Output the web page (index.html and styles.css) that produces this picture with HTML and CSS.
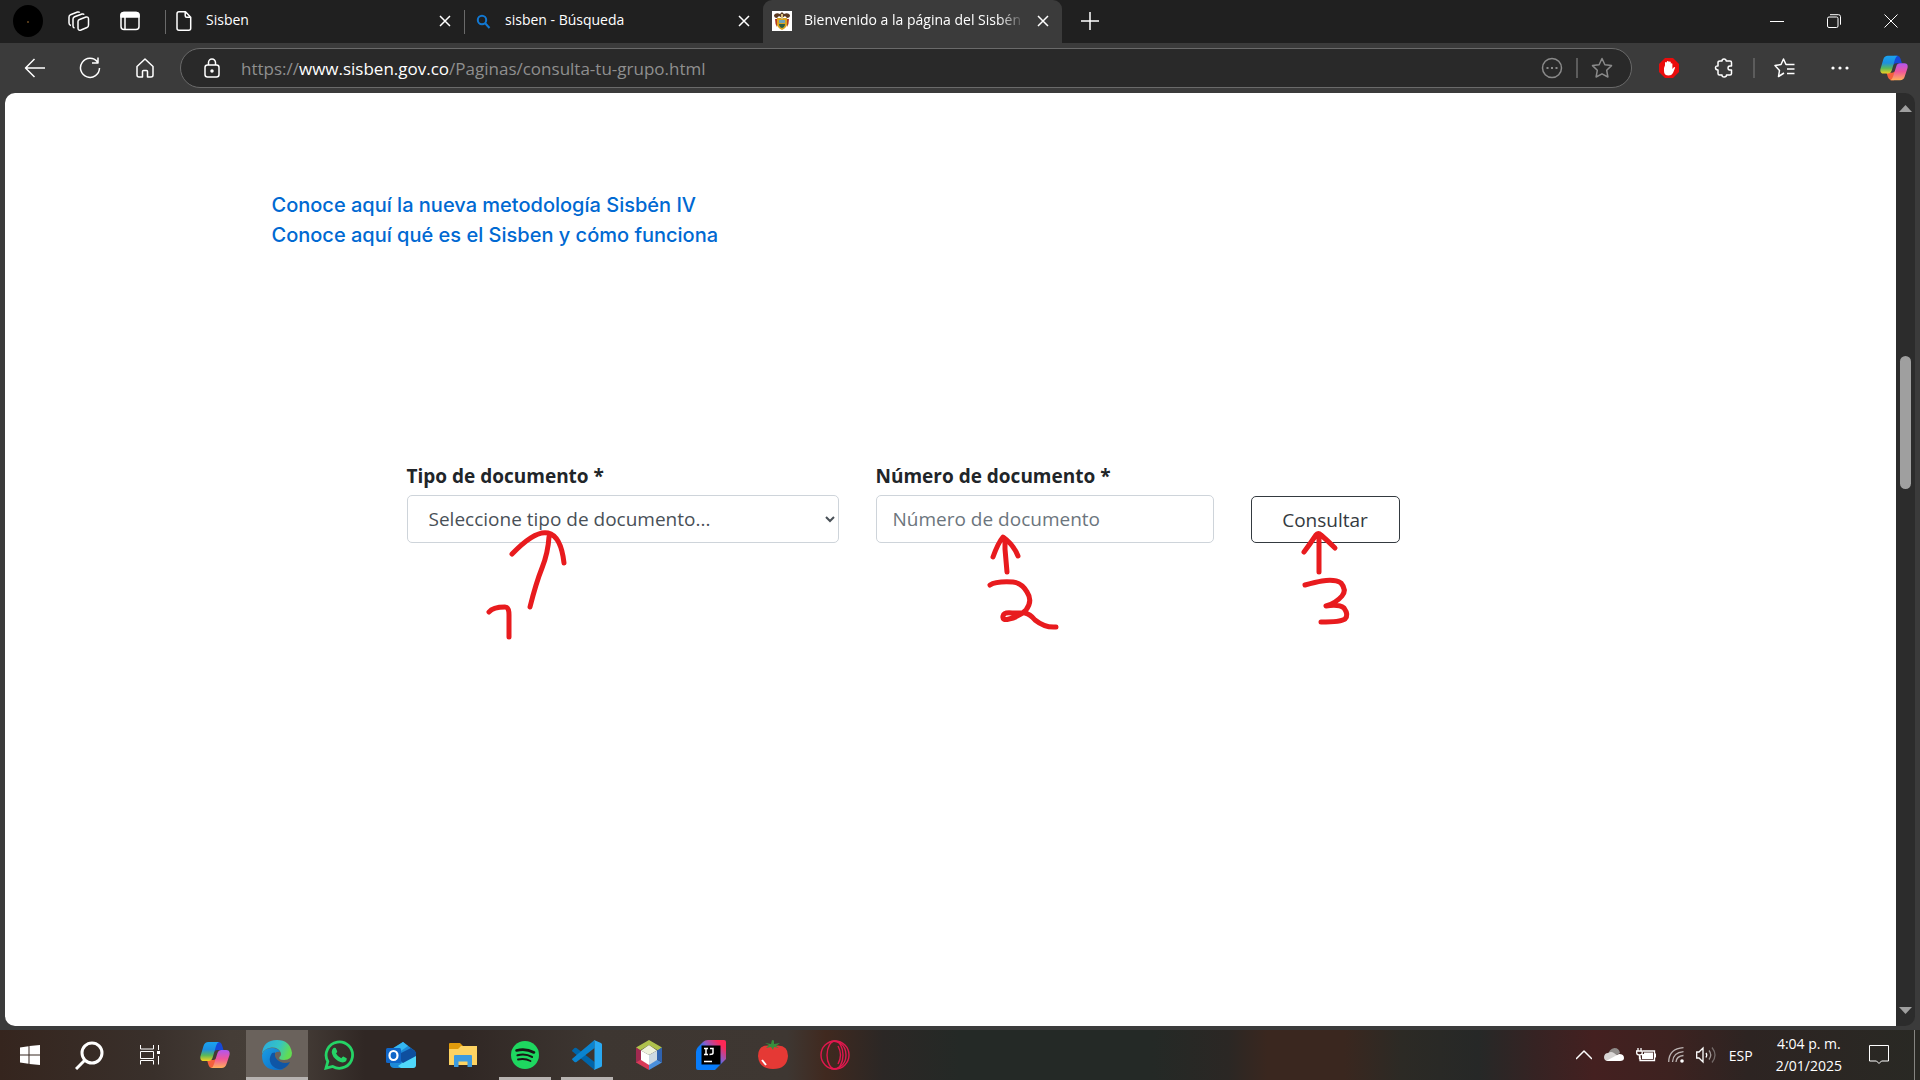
FILE: index.html
```html
<!DOCTYPE html>
<html lang="es">
<head>
<meta charset="utf-8">
<meta name="viewport" content="width=device-width, initial-scale=1">
<title>Bienvenido a la página del Sisbén</title>
<link rel="stylesheet" href="styles.css">
</head>
<body>
<svg class="defs" aria-hidden="true">
  <defs>
    <linearGradient id="cpA" x1="0" y1="0" x2="0" y2="1"><stop offset="0" stop-color="#1aa3f0"/><stop offset=".4" stop-color="#1d8fe0"/><stop offset=".7" stop-color="#59b85a"/><stop offset="1" stop-color="#f4d21f"/></linearGradient>
    <linearGradient id="cpB" x1="0" y1="0" x2="0" y2="1"><stop offset="0" stop-color="#b056f0"/><stop offset=".5" stop-color="#f0569a"/><stop offset="1" stop-color="#ffb05a"/></linearGradient>
    <linearGradient id="edA" x1="0" y1="0" x2="1" y2=".3"><stop offset="0" stop-color="#2aa8e0"/><stop offset=".6" stop-color="#35c4c4"/><stop offset="1" stop-color="#62dc52"/></linearGradient>
    <linearGradient id="edB" x1="0" y1="0" x2="1" y2="1"><stop offset="0" stop-color="#1b9de2"/><stop offset="1" stop-color="#0a6ac8"/></linearGradient>
    <linearGradient id="ijA" x1="0" y1="1" x2="1" y2="0"><stop offset=".45" stop-color="#087cfa"/><stop offset=".6" stop-color="#8a5cc8"/><stop offset=".85" stop-color="#fe2857"/></linearGradient>
    <symbol id="copilot" viewBox="0 0 30 28">
      <path fill="#1648d8" d="M15 1h3.500q2.500 0 3.500 3l1.500 5h-6q-3 0-4 3z"/>
      <path fill="#f4603c" d="M7 19h6q3 0 4-3l-2 11h-3q-2.500 0-3.500-3z"/>
      <path fill="url(#cpA)" d="M8.500 1H19q-2 .5-3 4l-3.500 12q-1 3-4 3H4q-4.500 0-3.500-5L3.500 5Q4.700 1 8.500 1z"/>
      <path fill="url(#cpB)" d="M21.500 27H11q2-.5 3-4l3.500-11q1-3 4-3H26q4.500 0 3.500 5l-3 9q-1.200 4-5 4z"/>
    </symbol>
  </defs>
</svg>

<header class="titlebar">
  <div class="title-tools">
    <button class="tool" aria-label="Perfil"><svg width="30" height="32"><ellipse cx="15" cy="16" rx="15" ry="16" fill="#000"/><circle cx="15" cy="17" r="1" fill="#6b4a20"/></svg></button>
    <button class="tool" aria-label="Áreas de trabajo"><svg class="line" width="22" height="22" viewBox="0 0 22 22"><path d="M11.500 8.500 18 6q2.500-.5 2.500 2v6q0 2-1.500 2.500L13 19q-3 1-3-2v-6.500q0-1.500 1.500-2zM6.500 17Q5 16.500 5 15V8q0-1.500 1.500-2.200L14 3q1.500-.4 2.200.6M3 14.500q-2-.5-2-2.500V6q0-1.700 1.500-2.300L9.500 1q1.500-.4 2.200.6" transform="translate(0 1)"/></svg></button>
    <button class="tool" aria-label="Acciones de pestañas"><svg class="line" width="20" height="20" viewBox="0 0 20 20"><rect x="1" y="1.500" width="18" height="17" rx="3"/><path d="M1 6V4.500Q1 1.500 4 1.500h12q3 0 3 3V6z" fill="#fff"/><path d="M5 6v12"/></svg></button>
  </div>
  <nav class="tabs" aria-label="Pestañas">
    <div class="tab">
      <svg class="tab-icon line" viewBox="0 0 20 20"><path d="M5 .8h6.500l5.200 5.400v11q0 2-2 2H5q-2 0-2-2V2.800q0-2 2-2zM11.200 1v3.700q0 1.500 1.500 1.500h4"/></svg>
      <span class="tab-title">Sisben</span>
      <button class="tab-close" aria-label="Cerrar"><svg class="line" width="12" height="12"><path d="m1 1 10 10M11 1 1 11"/></svg></button>
    </div>
    <div class="tab">
      <svg class="tab-icon" viewBox="0 0 20 20" fill="none" stroke="#1278d2" stroke-width="2"><circle cx="9" cy="9" r="4.200"/><path d="m12 12 4.500 5"/></svg>
      <span class="tab-title">sisben - Búsqueda</span>
      <button class="tab-close" aria-label="Cerrar"><svg class="line" width="12" height="12"><path d="m1 1 10 10M11 1 1 11"/></svg></button>
    </div>
    <div class="tab active">
      <svg class="tab-icon" viewBox="0 0 20 20"><path fill="#fff" d="M0 0h20v20H0z"/><path fill="#5c3a22" d="M10 1 8 3Q4 1 2 4q0 3 3 3l2-2 3 2 3-2 2 2q3 0 3-3-2-3-6-1z"/><path fill="#d9a420" d="M5 7h10l1 4q-1 6-6 8-5-2-6-8z"/><path fill="#b33a22" d="M3 8h2v8q-2-3-2-8zm12 0h2q0 5-2 8z"/><path fill="#6fa2b8" d="M7 9h6v3H7z"/><path fill="#2c5c46" d="M7 13h6q0 3-3 4-3-1-3-4z"/><path fill="#d9c080" d="M9 3h2v5H9z"/></svg>
      <span class="tab-title">Bienvenido a la página del Sisbén</span>
      <button class="tab-close" aria-label="Cerrar"><svg class="line" width="12" height="12"><path d="m1 1 10 10M11 1 1 11"/></svg></button>
    </div>
  </nav>
  <button class="tool" aria-label="Nueva pestaña"><svg class="line" width="18" height="18"><path d="M9 0v18M0 9h18"/></svg></button>
  <div class="window-buttons">
    <button class="tool" aria-label="Minimizar"><svg class="thin" width="14" height="14"><path d="M0 7.500h14"/></svg></button>
    <button class="tool" aria-label="Restaurar"><svg class="thin" width="14" height="14"><rect x=".5" y="3" width="10.500" height="10.500" rx="1.500"/><path d="M3 .7h8.500q2 0 2 2v8"/></svg></button>
    <button class="tool" aria-label="Cerrar ventana"><svg class="thin" width="14" height="14"><path d="m.5.5 13 13M13.500.5l-13 13"/></svg></button>
  </div>
</header>

<div class="toolbar">
  <button class="tool" aria-label="Atrás"><svg class="line" width="22" height="20"><path d="M21 10H2M10.500 1 1.500 10l9 9"/></svg></button>
  <button class="tool" aria-label="Actualizar"><svg class="line" width="22" height="22"><path d="M18.500 5A9.500 9.500 0 1 0 20.500 11M19 .5v5.500h-6"/></svg></button>
  <button class="tool" aria-label="Inicio"><svg class="line" width="20" height="20"><path d="M2 8.500 10 1l8 7.500V17q0 2-2 2h-3.500v-5.500q0-1-1-1h-3q-1 0-1 1V19H4q-2 0-2-2z"/></svg></button>
  <div class="address">
    <svg class="line" width="18" height="20"><rect x="2" y="7" width="14" height="12" rx="2.500"/><path d="M5.500 7V4.500a3.500 3.500 0 0 1 7 0V7"/><circle cx="9" cy="13" r="1" fill="#fff"/></svg>
    <p class="url">https://<strong>www.sisben.gov.co</strong>/Paginas/consulta-tu-grupo.html</p>
    <button class="mini" aria-label="Más opciones"><svg class="gray" width="22" height="22"><circle cx="11" cy="11" r="9.500"/><path d="M5.500 11h2m2.500 0h2m2.500 0h2" stroke-width="2"/></svg></button>
    <span class="divider"></span>
    <button class="mini" aria-label="Agregar a favoritos"><svg class="gray" width="22" height="22"><path d="m11 1.500 2.900 6.200 6.600.9-4.800 4.700 1.200 6.700L11 16.800 5.100 20l1.200-6.700L1.500 8.600l6.600-.9z"/></svg></button>
  </div>
  <button class="tool" aria-label="AdBlock"><svg width="20" height="20"><path fill="#e90c0c" d="M6 0h8l6 6v8l-6 6H6l-6-6V6z"/><path fill="#fff" d="M6 10V5q0-1 .9-1t.9 1V4q0-1 1-1t1 1v.5q0-1 1-1t1 1V6q0-.8.8-.8t.8.8v5l1.200-1.500q.9-.8 1.600 0L14 15q-1.500 2.500-4.300 2.500Q5 17.500 5 13V7.300z"/></svg></button>
  <button class="tool" aria-label="Extensiones"><svg class="line" width="20" height="20"><path d="M6 3h2q0-2 2-2t2.200 2H16q1.500 0 1.500 1.500V8q-3.500-.5-3.500 2t3.500 2v3.500q0 1.500-1.500 1.500h-3.500q0 2-2.300 2T8 17H5.500Q4 17 4 15.500V12q-2.500 0-2.500-2.200T4 8V4.500Q4 3 6 3z"/></svg></button>
  <span class="divider"></span>
  <button class="tool" aria-label="Favoritos"><svg class="line" width="22" height="22"><path d="m10 16-5.500 3.500 1-6L1 8.500l6-1L9.500 2 12 7.500h8.500M13 12h7.500M13 16.500h7.500"/></svg></button>
  <button class="tool" aria-label="Configuración"><svg width="18" height="4" fill="#fff"><circle cx="2" cy="2" r="1.600"/><circle cx="9" cy="2" r="1.600"/><circle cx="16" cy="2" r="1.600"/></svg></button>
  <button class="tool" aria-label="Copilot"><svg width="28" height="28"><use href="#copilot"/></svg></button>
</div>

<div class="viewport">
  <main class="page">
    <div class="container">
      <div class="links">
        <a href="#metodologia">Conoce aquí la nueva metodología Sisbén IV</a>
        <a href="#que-es">Conoce aquí qué es el Sisben y cómo funciona</a>
      </div>
      <form class="query">
        <div class="field">
          <label for="tipo">Tipo de documento *</label>
          <div class="control">
            <select id="tipo"><option>Seleccione tipo de documento...</option></select>
            <svg class="mark" width="180" height="150"><path d="M105 59Q128 35 141 38t16 30M142 42q-1 16-7 31t-12 39M82 117q4-5 16-5 4 0 4 8v22"/></svg>
          </div>
        </div>
        <div class="field">
          <label for="numero">Número de documento *</label>
          <div class="control">
            <input id="numero" type="text" placeholder="Número de documento">
            <svg class="mark" width="200" height="150"><path d="M117 62q5-14 10-20 10 7 15 19M129 44v10l2 23M114 90q6-4 23-3 9 1 14 10 6 9-1 18-7 7-17 9-7 2-6-3 1-4 9-3h13q5 1 10 7 10 8 21 7"/></svg>
          </div>
        </div>
        <div class="field action">
          <div class="control">
            <button class="submit" type="button">Consultar</button>
            <svg class="mark" width="120" height="150"><path d="M53 56q6-8 12-17 2-3 5 0 7 6 14 13M68 42v34M54 89q11-3 17-4 13-2 19 2 6 7 1 13-6 7-16 10 13-2 18 2 5 7 1 11-4 3-24 3"/></svg>
          </div>
        </div>
      </form>
    </div>
  </main>
  <div class="scrollbar" aria-hidden="true">
    <svg width="13" height="7"><path d="M6.500 0 13 7H0z" fill="#9f9f9f"/></svg>
    <div class="track"><div class="thumb"></div></div>
    <svg width="13" height="7"><path d="M0 0h13L6.500 7z" fill="#9f9f9f"/></svg>
  </div>
</div>

<footer class="taskbar">
  <div class="apps system">
    <button aria-label="Inicio"><svg width="20" height="20" fill="#fff"><path d="m0 2.500 8.500-1.300v8.300H0zM9.500 1 20 0v9.500H9.500zM0 10.500h8.500v8.300L0 17.500zm9.500 0H20V20L9.500 19z"/></svg></button>
    <button aria-label="Buscar"><svg width="30" height="30" fill="none" stroke="#fff" stroke-width="3"><circle cx="17" cy="13" r="10"/><path d="M10 20 1 29"/></svg></button>
    <button aria-label="Vista de tareas"><svg class="thin" width="20" height="20"><path d="M.5 0v4h13V0M.5 19.500v-4h13v4M.5 6.500h13v7H.5zM18.500 0v5M18.500 11v8.500"/><path fill="#fff" stroke="none" d="M17 6h3v3h-3z"/></svg></button>
  </div>
  <div class="apps">
    <button aria-label="Copilot"><svg width="30" height="28"><use href="#copilot"/></svg></button>
    <button class="current" aria-label="Edge"><svg width="30" height="30"><path fill="url(#edB)" d="M0 15Q2 8 10 8q6 0 8 4-6-1-6 5 1 8 10 12-3 1-7 1Q0 30 0 15z"/><path fill="#0f56a6" d="M10 13q-4 6-1 11 4 6 11 5 5-1.500 8-7-5 2-9.500 0Q12 19 13 12.500z"/><path fill="url(#edA)" d="M0 14Q1 0 15 0q13 0 15 13 0 7-8 7-6 0-4.500-3 2.500-2 1-5Q16 7 9.500 7.500 2 8.500 0 14z"/></svg></button>
    <button aria-label="WhatsApp"><svg width="30" height="30"><path fill="none" stroke="#25d366" stroke-width="2.800" d="M2 28.200 3.800 21.500A13.200 13.200 0 1 1 8.700 26.500z"/><path fill="#25d366" d="M9.500 8q1-.7 2.200 0l1.500 3.300q.2.800-1.200 2.200 1.800 3.500 5.300 4.800 1.300-1.800 2-1.700l3.400 1.700q.4 3.700-4 4.200-4.700-.3-9.200-5.500Q6 11 9.500 8z"/></svg></button>
    <button aria-label="Outlook"><svg width="30" height="28"><path fill="#1d8ad8" d="M4 9 17 1l12 9v14q0 3-3 3H8q-3 0-4-3z"/><path fill="#35b8f1" d="M6 8 17 1l5 4L9 14z"/><path fill="#4fd8fb" d="m30 12-18 13 3 2h12q3 0 3-3z"/><path fill="#0e4f9f" d="m9 15 16-8 5 4v4l-13 7z"/><rect y="7" width="15" height="15" rx="1.500" fill="#1066c8"/><ellipse cx="7.500" cy="14.500" rx="4" ry="4.500" fill="none" stroke="#fff" stroke-width="2.200"/></svg></button>
    <button aria-label="Explorador de archivos"><svg width="28" height="24"><path fill="#e09b0c" d="M0 1q0-1 1-1h10l3 3v4H0z"/><path fill="#fdd362" d="M0 6h9l3-3h16v19H0z"/><path fill="#3c9be0" d="M5 24V13q0-1 1-1h16q1 0 1 1v11h-4.500v-5.500h-9V24z"/></svg></button>
    <button class="open" aria-label="Spotify"><svg width="28" height="28"><circle cx="14" cy="14" r="14" fill="#1ed760"/><path fill="none" stroke="#191414" stroke-linecap="round" d="M5.500 9.500q9-2.500 17.500 2" stroke-width="2.600"/><path fill="none" stroke="#191414" stroke-linecap="round" d="M6.500 14.200q8-2 14.500 1.700" stroke-width="2.200"/><path fill="none" stroke="#191414" stroke-linecap="round" d="M7 18.500q7-1.500 12.500 1.500" stroke-width="1.800"/></svg></button>
    <button class="open" aria-label="Visual Studio Code"><svg width="30" height="30"><path fill="#0065a9" d="m.5 10 2-2q1-.7 2 0L22.500 22v8L.5 11.500q-.8-.8 0-1.500z"/><path fill="#0a84d0" d="m.5 20 2 2q1 .7 2 0L22.500 8V0L.5 18.500q-.8.700 0 1.500z"/><path fill="#29a9f2" d="m22 0 7 3q1 .5 1 1.500v21q0 1-1 1.500l-7 3q.5-1 .5-2V2q0-1-.5-2z"/></svg></button>
    <button aria-label="NetBeans"><svg width="26" height="30"><path fill="#afc24c" d="m13 0 13 7.500-4 3L13 5 4 10.500l-4-3z"/><path fill="#a02a50" d="m0 7.500 5 3v10l-5 2.500z"/><path fill="#d83a58" d="m0 22.500 5-3 8 5V30z"/><path fill="#4a8fdc" d="m13 30 13-7.500-5-3-8 5z"/><path fill="#2f62ae" d="m26 7.500-5 3v9l5 3z"/><path fill="#eff2dc" d="m13 5 8 5.500-8 4.500-8-4.500z"/><path fill="#fff" d="m5 10.500 8 4.500v10l-8-5z"/><path fill="#ccd8e2" d="m21 10.500-8 4.500v10l8-5z"/></svg></button>
    <button aria-label="IntelliJ IDEA"><svg width="30" height="30"><path fill="url(#ijA)" d="M12 0h16q2 0 2 2v17L19 30H2q-2 0-2-2V12q0-3 2-5l5-5q2-2 5-2z"/><path d="M5.500 5.500h19v19h-19z"/><path d="M8 8.500h4M10 8.500v6M8 14.500h4M14 8.500h3v4.500q0 1.500-3.500 1.500M8 21.500h8" fill="none" stroke="#fff" stroke-width="1.500"/></svg></button>
    <button aria-label="Pomodoro"><svg width="30" height="30"><path fill="#e53935" d="M15 6Q30 3 30 16q-1 13-15 13T0 16Q0 3 15 6z"/><path fill="#388e3c" d="m14 0 2 .5V4l6-1-4 3 3 2-5-1-1 3-2-3-5 1 3-3-4-2 6 1z"/><path d="m4 20 4 5" stroke="#fff" stroke-width="2"/></svg></button>
    <button aria-label="Opera GX"><svg width="30" height="30" fill="none" stroke="#e0184e" stroke-width="1.400"><circle cx="15" cy="15" r="14"/><ellipse cx="15" cy="15" rx="8" ry="14"/><path d="M10 2q5-2 10 1 6 4 6 12t-6 12q-5 3-10 1M18 6q5 9 0 18"/></svg></button>
  </div>
  <div class="tray">
    <svg class="line" width="16" height="10"><path d="m0 9 8-8 8 8"/></svg>
    <svg width="20" height="14"><path fill="#8f8b89" d="M4 7q1-6 6.500-7Q15 0 16 5l-8 5z"/><path fill="#d8d5d4" d="M4 5q3-2 6 0l5 4-9 4H4Q0 13 0 9q.5-4 4-4z"/><path fill="#fff" d="M2 13 15 6q5 0 5 4 0 3-4 3z"/></svg>
    <svg width="20" height="14"><path fill="none" stroke="#fff" stroke-width="1.300" d="M7 3h11.500v9.500H4V8M2 0v2.500M5 0v2.500M.7 3h5.500v2q0 2-2.700 2T.7 5zM3.500 7v3.500H5M19.500 5.500v4"/><path fill="#fff" d="M6 6h2V4.500h9V11H6z"/></svg>
    <svg width="16" height="16" fill="none" stroke="#bdb5b4" stroke-width="1.300"><path d="M.7 15Q1 1.500 15.500.7M4.500 15Q5 5.500 15.500 4.700M8 15q.5-6 7.500-6.500"/><circle cx="14" cy="14" r="1.800" fill="#fff" stroke="none"/></svg>
    <svg width="20" height="18" fill="none" stroke="#fff" stroke-width="1.300"><path d="M.7 6H3l4-4v14l-4-4H.7zM10 7q1.500 2 0 4.500"/><path stroke="#a09896" d="M13 4.500q3.500 4.500 0 9"/><path stroke="#756c6a" d="M16 1.500q6 7.500 0 15"/></svg>
    <span class="lang">ESP</span>
    <time class="clock" datetime="2025-01-02T16:04"><span>4:04 p. m.</span><span>2/01/2025</span></time>
    <svg class="thin" width="20" height="20"><path d="M.5.5h19v15.500h-7L10 18.500 7.500 16h-7z"/></svg>
  </div>
</footer>
</body>
</html>
```
FILE: styles.css
```css
* {
  box-sizing: border-box;
}

body {
  margin: 0;
  min-height: 100vh;
  display: flex;
  flex-direction: column;
  background: #3b3b3b;
  color: #fff;
  font-family: "Open Sans", "Noto Sans", sans-serif;
  font-size: 14px;
}

button {
  margin: 0;
  padding: 0;
  border: 0;
  background: none;
  color: inherit;
  font: inherit;
}

svg {
  display: block;
  flex: none;
}

.defs {
  position: absolute;
  width: 0;
  height: 0;
}

.line,
.thin,
.gray {
  fill: none;
  stroke: #fff;
  stroke-width: 1.5;
  stroke-linejoin: round;
}

.thin {
  stroke-width: 1;
}

.gray {
  stroke: #8a8a8a;
}

.tool {
  width: 55px;
  height: 100%;
  display: flex;
  align-items: center;
  justify-content: center;
  flex: none;
}

.divider {
  width: 2px;
  height: 20px;
  margin: 0 2px;
  background: #5c5c5c;
}

/* Title bar */
.titlebar {
  height: 43px;
  display: flex;
  background: #202020;
}

.titlebar .tool,
.tab {
  padding-bottom: 1px;
}

.title-tools {
  display: flex;
  padding: 0 10px 0 2px;
}

.title-tools .tool {
  width: 51px;
}

.tabs {
  display: flex;
  min-width: 0;
}

.tab {
  width: 299px;
  min-width: 0;
  padding-left: 9px;
  padding-right: 9px;
  display: flex;
  align-items: center;
  position: relative;
}

.tab::before {
  content: "";
  position: absolute;
  left: 0;
  top: 10px;
  width: 1px;
  height: 24px;
  background: #6a6a6a;
}

.tab.active {
  background: #3b3b3b;
  border-radius: 9px 9px 0 0;
}

.tab.active::before {
  display: none;
}

.tab-icon {
  width: 20px;
  height: 20px;
  margin-right: 12px;
}

.tab-title {
  flex: 1;
  overflow: hidden;
  white-space: nowrap;
  line-height: 20px;
  padding-bottom: 2px;
  margin-right: 8px;
}

.active .tab-title {
  mask-image: linear-gradient(90deg, #000 88%, transparent);
}

.tab-close {
  width: 20px;
  height: 20px;
  display: grid;
  place-items: center;
}

.window-buttons {
  margin-left: auto;
  padding-right: 1px;
  display: flex;
}

.window-buttons .tool {
  width: 57px;
}

/* Toolbar */
.toolbar {
  height: 50px;
  display: flex;
  align-items: center;
  padding-left: 7px;
}

.toolbar .tool:last-child {
  width: 53px;
}

.address {
  flex: 1;
  min-width: 0;
  height: 40px;
  margin: 0 9px 0 8px;
  padding: 0 17px 0 22px;
  display: flex;
  align-items: center;
  border: 1px solid #6a6a6a;
  border-radius: 20px;
  background: #292929;
}

.url {
  flex: 1;
  margin: 0 0 0 20px;
  overflow: hidden;
  white-space: nowrap;
  color: #8f8f8f;
  font-size: 17px;
}

.url strong {
  color: #fff;
  font-weight: 400;
}

.mini {
  width: 24px;
  height: 24px;
  display: grid;
  place-items: center;
}

.address .divider {
  margin: 0 12px;
}

/* Page area */
.viewport {
  flex: 1;
  margin: 0 5px 4px;
  display: flex;
  border-radius: 10px;
  overflow: hidden;
  background: #2c2c2c;
}

.page {
  flex: 1;
  background: #fff;
  color: #212529;
  font-size: 19px;
}

.container {
  max-width: 1426px;
  margin: 0 auto;
  padding: 97px 34px;
}

.links {
  display: flex;
  flex-direction: column;
  align-items: flex-start;
  font-family: Inter, sans-serif;
  font-size: 20px;
  font-weight: 500;
  line-height: 30px;
}

.links a {
  color: #0069d2;
  text-decoration: none;
}

.query {
  max-width: 993px;
  margin: 211px 0 0 135px;
  display: grid;
  grid-template-columns: 432fr 338fr 149fr;
  gap: 37px;
  align-items: end;
}

.field label {
  display: block;
  margin-bottom: 4px;
  line-height: 30px;
  font-weight: 700;
}

.control {
  position: relative;
}

.control select,
.control input,
.submit {
  display: block;
  width: 100%;
  height: 48px;
  border: 1px solid #ced4da;
  border-radius: 5px;
  background: #fff;
  color: #495057;
  font: inherit;
}

.control select {
  padding: 0 2px 0 17px;
}

.control input {
  padding: 0 16px;
}

.control input::placeholder {
  color: #6c757d;
}

.submit {
  height: 47px;
  border-color: #343a40;
  color: #343a40;
}

.mark {
  position: absolute;
  left: 0;
  top: 0;
  fill: none;
  stroke: #e81b1e;
  stroke-width: 5;
  stroke-linecap: round;
  stroke-linejoin: round;
  pointer-events: none;
}

.scrollbar {
  width: 19px;
  padding: 12px 0;
  display: flex;
  flex-direction: column;
  align-items: center;
}

.track {
  flex: 1;
  padding-top: 244px;
}

.thumb {
  width: 11px;
  height: 133px;
  border-radius: 6px;
  background: #9f9f9f;
}

/* Taskbar */
.taskbar {
  height: 50px;
  display: flex;
  background: linear-gradient(90deg, #35251e 0, #39302b 8%, #453d37 12%, #473f39 15%, #302724 19%, #302724 24%, #3d3631 31%, #3e3732 41%, #40291f 43%, #2b2725 46%, #242926 50%, #242926 60%, #2b2724 64%, #3a271f 66%, #3a271f 70%, #2c2a25 73%, #262827 77%, #362323 80%, #442020 83%, #3d2220 87%, #2d2422 91%, #292924 100%);
}

.apps {
  display: flex;
  min-width: 0;
}

.apps button {
  width: 62px;
  display: flex;
  align-items: center;
  justify-content: center;
  position: relative;
}

.system {
  margin-right: 4px;
}

.system button {
  width: 60px;
}

.apps .current {
  background: #6a625c;
}

.apps .current::after,
.apps .open::after {
  content: "";
  position: absolute;
  left: 5px;
  right: 5px;
  bottom: 0;
  height: 3px;
  background: #b7b3b1;
}

.apps .current::after {
  left: 0;
  right: 0;
}

.tray {
  display: flex;
  align-items: center;
  gap: 12px;
  margin-left: auto;
  margin-right: 5px;
  padding-right: 25px;
  border-right: 1px solid #858581;
}

.lang {
  margin-left: 1px;
}

.clock {
  margin: 0 15px 0 11px;
  display: flex;
  flex-direction: column;
  align-items: center;
  line-height: 22px;
}
```
